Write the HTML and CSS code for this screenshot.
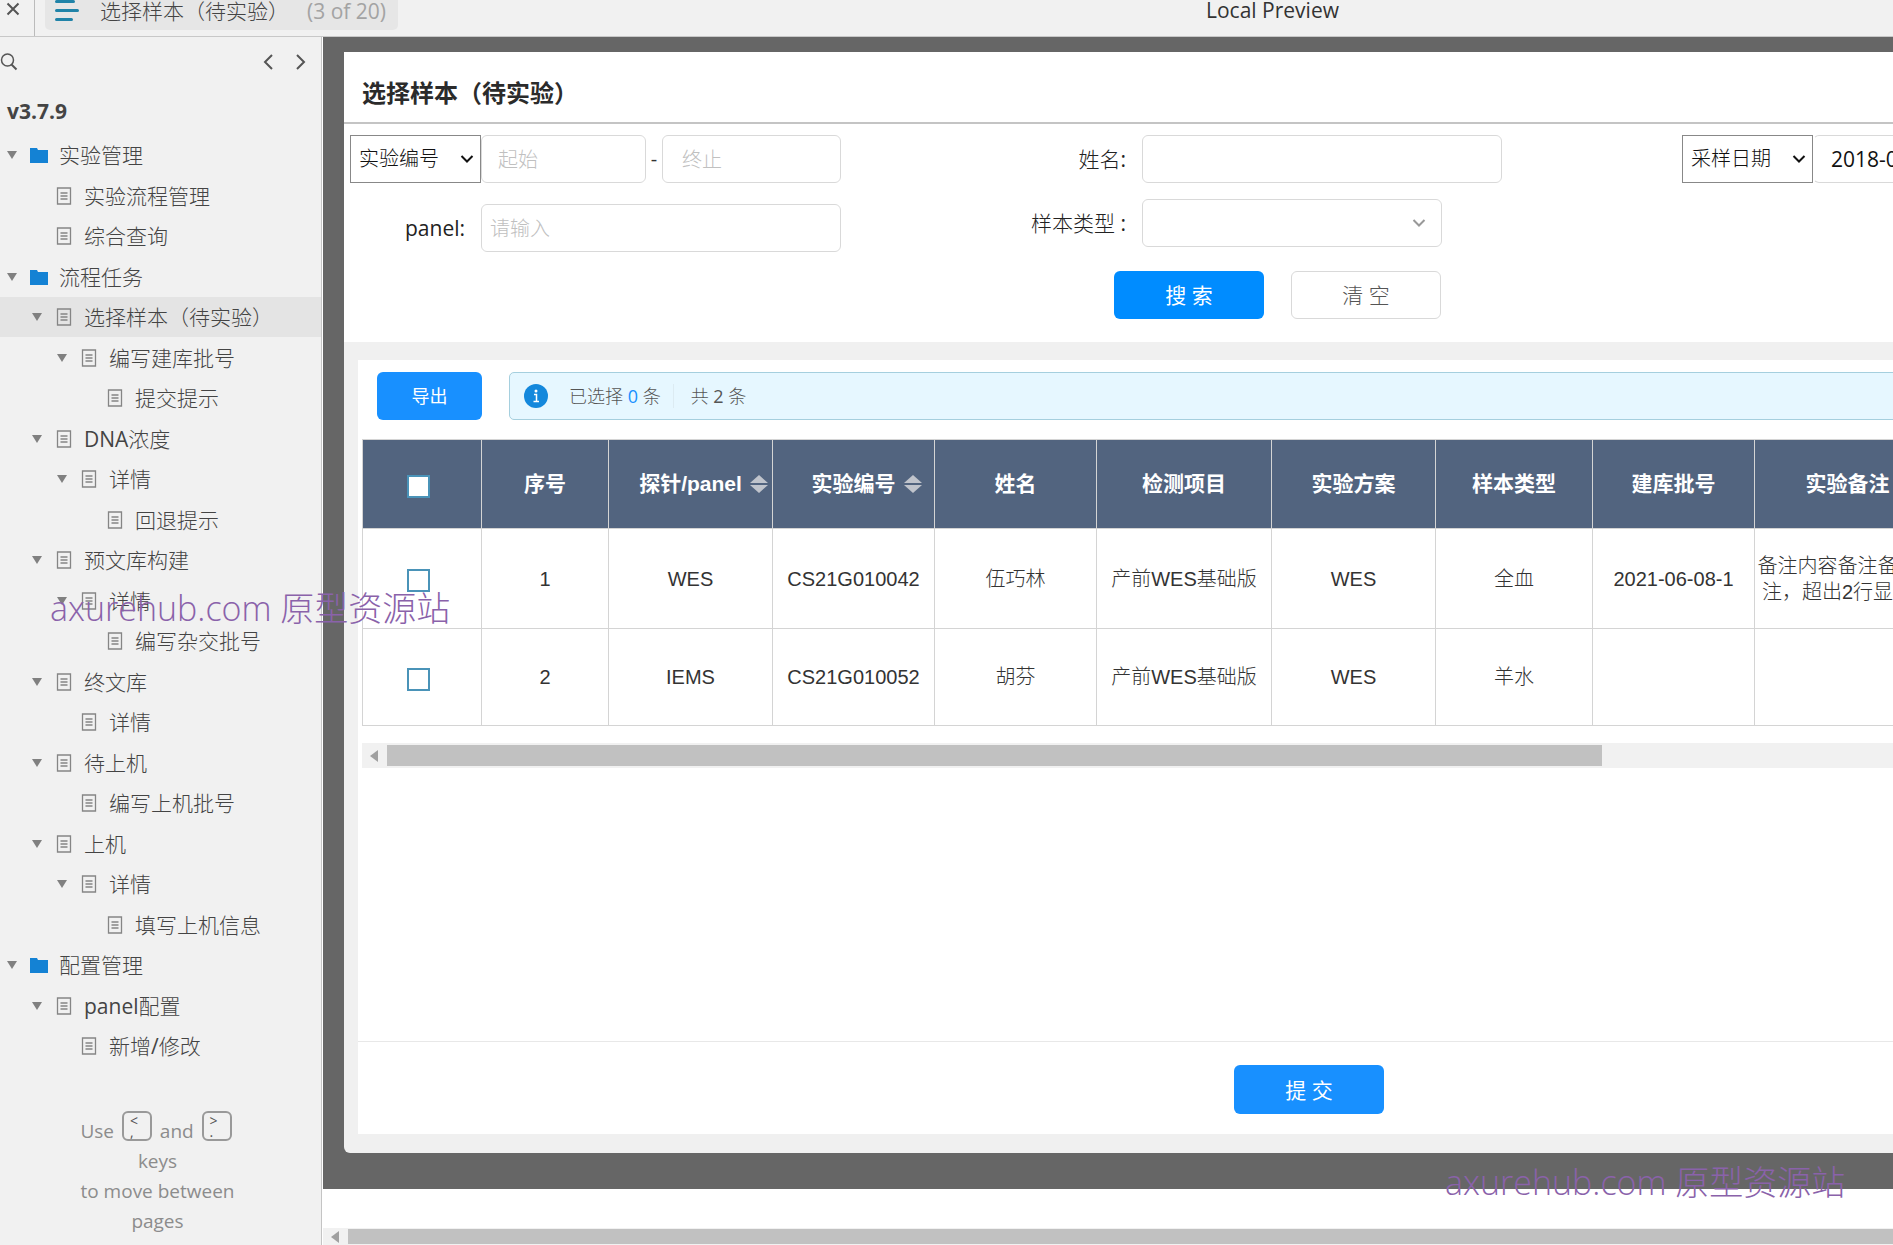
FILE: index.html
```html
<!DOCTYPE html>
<html lang="zh-CN">
<head>
<meta charset="utf-8">
<title>选择样本（待实验）</title>
<link rel="stylesheet" href="styles.css">
</head>
<body>
<svg class="defs" aria-hidden="true">
  <symbol id="i-caret" viewBox="0 0 10 8"><path d="M0 0h10L5 8z" fill="#808080"/></symbol>
  <symbol id="i-folder" viewBox="0 0 18 16"><path d="M0 1h7l1 2h10v13H0z" fill="#1482d4"/></symbol>
  <symbol id="i-page" viewBox="0 0 18 18"><path d="M2.500 1h13v16h-13zM5.500 6h7M5.500 9h7M5.500 12h7" fill="none" stroke="#858585" stroke-width="1.300"/></symbol>
  <symbol id="i-chevron" viewBox="0 0 14 14"><path d="M1.500 4L7 9.500 12.500 4" fill="none" stroke="currentColor" stroke-width="2"/></symbol>
  <symbol id="i-sort" viewBox="0 0 18 18"><path d="M9 0l9 8H0zM9 18l9-8H0z" fill="#c0c4cc"/></symbol>
</svg>

<header class="topbar">
  <button class="close" aria-label="关闭"><svg width="14" height="14" viewBox="0 0 14 14"><path d="M1.500 1.500l11 11M12.500 1.500l-11 11" stroke="#555" stroke-width="2"/></svg></button>
  <button class="page-pill">
    <svg width="24" height="22" viewBox="0 0 24 22"><path d="M1.500 1.500h17M1.500 10.500h21M1.500 19.500h15" stroke="#2083a8" stroke-width="3" stroke-linecap="round"/></svg>
    <span class="pill-name">选择样本（待实验）</span>
    <span class="pill-count">(3 of 20)</span>
  </button>
  <span class="preview">Local Preview</span>
</header>

<div class="main">
  <aside class="sidebar">
    <div class="side-tools">
      <button aria-label="搜索页面"><svg width="18" height="18" viewBox="0 0 18 18"><circle cx="7.500" cy="7" r="6" fill="none" stroke="#555" stroke-width="1.500"/><path d="M11.500 11.500l5 5" stroke="#555" stroke-width="2"/></svg></button>
      <button class="prev" aria-label="上一页"><svg width="12" height="18" viewBox="0 0 12 18"><path d="M10 2L3 9l7 7" fill="none" stroke="#555" stroke-width="2"/></svg></button>
      <button aria-label="下一页"><svg width="12" height="18" viewBox="0 0 12 18"><path d="M2 2l7 7-7 7" fill="none" stroke="#555" stroke-width="2"/></svg></button>
    </div>
    <h2 class="version">v3.7.9</h2>
    <nav>
      <ul class="tree">
        <li class="l0"><svg class="caret"><use href="#i-caret"/></svg><svg class="icon"><use href="#i-folder"/></svg><a href="#">实验管理</a></li>
        <li class="l1"><span class="caret"></span><svg class="icon"><use href="#i-page"/></svg><a href="#">实验流程管理</a></li>
        <li class="l1"><span class="caret"></span><svg class="icon"><use href="#i-page"/></svg><a href="#">综合查询</a></li>
        <li class="l0"><svg class="caret"><use href="#i-caret"/></svg><svg class="icon"><use href="#i-folder"/></svg><a href="#">流程任务</a></li>
        <li class="l1 current"><svg class="caret"><use href="#i-caret"/></svg><svg class="icon"><use href="#i-page"/></svg><a href="#">选择样本（待实验）</a></li>
        <li class="l2"><svg class="caret"><use href="#i-caret"/></svg><svg class="icon"><use href="#i-page"/></svg><a href="#">编写建库批号</a></li>
        <li class="l3"><span class="caret"></span><svg class="icon"><use href="#i-page"/></svg><a href="#">提交提示</a></li>
        <li class="l1"><svg class="caret"><use href="#i-caret"/></svg><svg class="icon"><use href="#i-page"/></svg><a href="#">DNA浓度</a></li>
        <li class="l2"><svg class="caret"><use href="#i-caret"/></svg><svg class="icon"><use href="#i-page"/></svg><a href="#">详情</a></li>
        <li class="l3"><span class="caret"></span><svg class="icon"><use href="#i-page"/></svg><a href="#">回退提示</a></li>
        <li class="l1"><svg class="caret"><use href="#i-caret"/></svg><svg class="icon"><use href="#i-page"/></svg><a href="#">预文库构建</a></li>
        <li class="l2"><svg class="caret"><use href="#i-caret"/></svg><svg class="icon"><use href="#i-page"/></svg><a href="#">详情</a></li>
        <li class="l3"><span class="caret"></span><svg class="icon"><use href="#i-page"/></svg><a href="#">编写杂交批号</a></li>
        <li class="l1"><svg class="caret"><use href="#i-caret"/></svg><svg class="icon"><use href="#i-page"/></svg><a href="#">终文库</a></li>
        <li class="l2"><span class="caret"></span><svg class="icon"><use href="#i-page"/></svg><a href="#">详情</a></li>
        <li class="l1"><svg class="caret"><use href="#i-caret"/></svg><svg class="icon"><use href="#i-page"/></svg><a href="#">待上机</a></li>
        <li class="l2"><span class="caret"></span><svg class="icon"><use href="#i-page"/></svg><a href="#">编写上机批号</a></li>
        <li class="l1"><svg class="caret"><use href="#i-caret"/></svg><svg class="icon"><use href="#i-page"/></svg><a href="#">上机</a></li>
        <li class="l2"><svg class="caret"><use href="#i-caret"/></svg><svg class="icon"><use href="#i-page"/></svg><a href="#">详情</a></li>
        <li class="l3"><span class="caret"></span><svg class="icon"><use href="#i-page"/></svg><a href="#">填写上机信息</a></li>
        <li class="l0"><svg class="caret"><use href="#i-caret"/></svg><svg class="icon"><use href="#i-folder"/></svg><a href="#">配置管理</a></li>
        <li class="l1"><svg class="caret"><use href="#i-caret"/></svg><svg class="icon"><use href="#i-page"/></svg><a href="#">panel配置</a></li>
        <li class="l2"><span class="caret"></span><svg class="icon"><use href="#i-page"/></svg><a href="#">新增/修改</a></li>
      </ul>
    </nav>
    <p class="hint">Use <kbd>&lt;<br>,</kbd> and <kbd>&gt;<br>.</kbd><br>keys<br>to move between<br>pages</p>
  </aside>

  <div class="viewport">
    <div class="stage">
      <main class="canvas">
        <section class="filters">
          <h1>选择样本（待实验）</h1>
          <form class="form">
            <div class="col col-range">
              <div class="row">
                <span class="picker native">
                  <select aria-label="编号类型"><option>实验编号</option></select>
                  <svg width="14" height="14"><use href="#i-chevron"/></svg>
                </span>
                <input class="field from" type="text" placeholder="起始" aria-label="起始">
                <span class="dash">-</span>
                <input class="field to" type="text" placeholder="终止" aria-label="终止">
              </div>
              <div class="row">
                <label class="label" for="panel">panel:</label>
                <input class="field wide panel" id="panel" type="text" placeholder="请输入">
              </div>
            </div>
            <div class="col col-name">
              <div class="row">
                <label class="label" for="name">姓名:</label>
                <input class="field wide" id="name" type="text">
              </div>
              <div class="row">
                <label class="label" for="kind">样本类型 :</label>
                <span class="picker soft">
                  <select id="kind"><option></option></select>
                  <svg width="14" height="14"><use href="#i-chevron"/></svg>
                </span>
              </div>
              <div class="row actions">
                <button type="button" class="btn search">搜 索</button>
                <button type="button" class="btn plain">清 空</button>
              </div>
            </div>
            <div class="col">
              <div class="row">
                <span class="picker native">
                  <select aria-label="日期类型"><option>采样日期</option></select>
                  <svg width="14" height="14"><use href="#i-chevron"/></svg>
                </span>
                <input class="field date" type="text" value="2018-08-01" aria-label="开始日期">
              </div>
            </div>
          </form>
        </section>

        <section class="card">
          <div class="card-body">
            <div class="toolbar">
              <button class="btn export">导出</button>
              <div class="alert">
                <svg width="24" height="24" viewBox="0 0 24 24"><circle cx="12" cy="12" r="12" fill="#1488dc"/><circle cx="12" cy="7" r="1.500" fill="#fff"/><path d="M10 10.500h2.500V17M9.500 17.500h5.500" fill="none" stroke="#fff" stroke-width="1.500"/></svg>
                <span class="picked">已选择 <b>0</b> 条</span>
                <span class="total">共 2 条</span>
              </div>
            </div>
            <div class="table-wrap">
              <table>
                <colgroup><col class="c119"><col class="c127"><col class="c164"><col class="c162"><col class="c162"><col class="c175"><col class="c164"><col class="c157"><col class="c162"><col class="c186"></colgroup>
                <thead>
                  <tr>
                    <th class="tick"><input type="checkbox" aria-label="全选"></th>
                    <th>序号</th>
                    <th><span class="sortable"><span>探针/panel</span><svg width="18" height="18"><use href="#i-sort"/></svg></span></th>
                    <th><span class="sortable"><span>实验编号</span><svg width="18" height="18"><use href="#i-sort"/></svg></span></th>
                    <th>姓名</th><th>检测项目</th><th>实验方案</th><th>样本类型</th><th>建库批号</th><th>实验备注</th>
                  </tr>
                </thead>
                <tbody>
                  <tr class="r1"><td class="tick"><input type="checkbox" aria-label="选择第1行"></td><td>1</td><td>WES</td><td>CS21G010042</td><td>伍巧林</td><td>产前WES基础版</td><td>WES</td><td>全血</td><td>2021-06-08-1</td><td>备注内容备注备注备<br>注，超出2行显示…</td></tr>
                  <tr class="r2"><td class="tick"><input type="checkbox" aria-label="选择第2行"></td><td>2</td><td>IEMS</td><td>CS21G010052</td><td>胡芬</td><td>产前WES基础版</td><td>WES</td><td>羊水</td><td></td><td></td></tr>
                </tbody>
              </table>
            </div>
            <div class="scrollbar inner"><svg width="8" height="12" viewBox="0 0 8 12"><path d="M8 0v12L0 6z" fill="#a0a0a0"/></svg><div class="thumb"></div></div>
          </div>
          <footer class="card-foot"><button class="btn submit">提 交</button></footer>
        </section>
      </main>
    </div>
    <div class="scrollbar outer"><svg width="8" height="12" viewBox="0 0 8 12"><path d="M8 0v12L0 6z" fill="#a0a0a0"/></svg><div class="thumb"></div></div>
  </div>
</div>

<div class="mark mark-a">axurehub.com 原型资源站</div>
<div class="mark mark-b">axurehub.com 原型资源站</div>
</body>
</html>
```
FILE: styles.css
```css
* { box-sizing: border-box; }

:root {
  --ui: "Open Sans", "Noto Sans CJK SC Light", "Noto Sans CJK SC", sans-serif;
  --data: "Liberation Sans", "Noto Sans CJK SC Light", "Noto Sans CJK SC", sans-serif;
  --strong: "Open Sans", "Noto Sans CJK SC", sans-serif;
  --line: #d9d9d9;
  --blue: #1890ff;
}

body {
  margin: 0;
  height: 100vh;
  display: flex;
  flex-direction: column;
  overflow: hidden;
  background: #fff;
  color: #333;
  font: 400 21px/30px var(--ui);
}

button, input, select { font: inherit; color: inherit; margin: 0; }
button { border: 0; background: none; padding: 0; }
svg { display: block; flex: none; }
.defs { position: absolute; width: 0; height: 0; }

/* top bar */
.topbar {
  display: flex;
  align-items: flex-start;
  height: 37px;
  flex: none;
  background: #f1f1f1;
  border-bottom: 1px solid #c8c8c8;
}
.close { width: 35px; height: 36px; padding: 2px 0 0 6px; border-right: 1px solid #bbb; display: flex; }
.page-pill {
  display: flex;
  align-items: flex-start;
  width: 353px;
  height: 30px;
  margin-left: 10px;
  padding-left: 10px;
  background: #e6e6e6;
  border-radius: 0 0 5px 5px;
  line-height: 23px;
}
.pill-name { margin-left: 21px; color: #444; }
.pill-count { margin-left: 18px; color: #a3a3a3; }
.preview { margin-left: 808px; line-height: 20px; color: #333; white-space: nowrap; }

.main { flex: 1; display: flex; min-height: 0; }

/* page tree */
.sidebar {
  width: 322px;
  flex: none;
  background: #f1f1f1;
  border-right: 1px solid #c4c4c4;
  color: #444;
}
.side-tools { display: flex; align-items: center; height: 50px; padding: 0 14px 0 0; gap: 21px; }
.side-tools .prev { margin-left: auto; }
.version { margin: 9px 0; padding-left: 7px; font-size: 21px; font-weight: 700; line-height: 30px; }
.tree { list-style: none; margin: 0; padding: 0; }
.tree li { display: flex; align-items: center; height: 40px; }
.tree li:nth-child(even) { height: 41px; }
.tree .current { background: #e4e4e4; }
.tree a { color: inherit; text-decoration: none; margin-left: 11px; white-space: nowrap; }
.caret { width: 10px; height: 8px; flex: none; margin-right: 13px; }
.icon { width: 18px; height: 18px; }
.l0 { padding-left: 7px; }
.l1 { padding-left: 32px; }
.l2 { padding-left: 57px; }
.l3 { padding-left: 83px; }
.hint { margin: 45px 6px 0 0; text-align: center; font-size: 19px; color: #8c8c8c; }
.hint kbd {
  display: inline-block;
  width: 30px;
  height: 30px;
  margin: 0 3px;
  padding: 2px 0 0 6px;
  border: 2px solid #999;
  border-radius: 6px;
  overflow: hidden;
  font: 14px/11px var(--ui);
  color: #555;
  text-align: left;
  vertical-align: -3px;
}

/* preview area */
.viewport { flex: 1; min-width: 0; display: flex; flex-direction: column; overflow: hidden; padding-left: 1px; }
.stage { background: #666; padding: 15px 0 36px 21px; }
.canvas { width: 1930px; background: #f0f0f0; border-radius: 0 0 6px 6px; overflow: hidden; padding-bottom: 19px; }

.filters { background: #fff; padding-bottom: 23px; }
h1 {
  margin: 0;
  padding: 26px 18px 15px;
  border-bottom: 2px solid #c4c4c4;
  font: 700 24px/29px var(--strong);
  color: #2b2b2b;
}
.form { display: flex; gap: 180px; padding: 11px 0 0 6px; font-size: 20px; }
.col { display: flex; flex-direction: column; gap: 16px; }
.col-range { gap: 21px; width: 491px; }
.row { display: flex; align-items: center; }
.label { flex: 1; text-align: right; padding-right: 16px; font-size: 21px; color: #222; white-space: nowrap; }
.col-name { width: 481px; }
.field, .picker select {
  height: 48px;
  border: 1px solid var(--line);
  border-radius: 6px;
  background: #fff;
  padding: 0 12px;
  outline: 0;
}
.field::placeholder { color: #c0c0c0; opacity: 1; }
.from { width: 165px; padding-left: 16px; }
.dash { width: 16px; text-align: center; }
.to { width: 179px; padding-left: 19px; }
.wide { width: 360px; }
.panel { padding-left: 8px; }
.date { width: 180px; padding-left: 17px; font-size: 21px; color: #111; border-left-color: transparent; }

.picker { display: grid; align-items: center; flex: none; color: #111; }
.picker select, .picker svg { grid-area: 1 / 1; }
.picker select { appearance: none; width: 100%; padding: 0 8px; }
.picker svg { justify-self: end; margin-right: 7px; pointer-events: none; }
.native { width: 131px; }
.native select { border: 1px solid #888; border-radius: 0; }
.soft { width: 300px; margin-right: 60px; color: #999; }
.soft svg { margin-right: 16px; }

.btn { height: 48px; border-radius: 6px; background: var(--blue); color: #fff; font: 400 21px/30px var(--strong); }
.actions { gap: 27px; padding: 8px 0 0 93px; }
.search, .plain, .submit { width: 150px; }
.search { background: #008cff; }
.plain { background: #fff; border: 1px solid var(--line); color: #555; font-family: var(--ui); }

/* results card */
.card { margin: 18px 14px 0; background: #fff; }
.card-body { min-height: 681px; padding: 12px 0 0 4px; }
.toolbar { display: flex; gap: 27px; padding-left: 15px; font-size: 18px; }
.export { width: 105px; font-size: 18px; }
.alert {
  flex: 1;
  display: flex;
  align-items: center;
  height: 48px;
  padding-left: 14px;
  border: 1px solid #a5cfde;
  border-radius: 5px;
  background: #e6f7ff;
  color: #555;
}
.picked { margin-left: 21px; padding-right: 12px; border-right: 1px solid #dcebf2; line-height: 24px; }
.picked b { color: var(--blue); font-weight: 400; }
.total { margin-left: 17px; }

.table-wrap { margin-top: 19px; overflow: hidden; }
table { border-collapse: collapse; table-layout: fixed; width: 1578px; font: 400 20px/26px var(--data); }
th, td { border: 1px solid #d4d4d4; padding: 0; text-align: center; vertical-align: middle; white-space: nowrap; }
th { height: 89px; background: #52647f; color: #fff; font: 700 21px/26px "Liberation Sans", "Noto Sans CJK SC", sans-serif; }
.r1 td { height: 100px; }
.r2 td { height: 97px; }
.tick { padding-right: 7px; }
.tick input {
  appearance: none;
  display: block;
  width: 23px;
  height: 23px;
  margin: 4px auto 0;
  border: 2px solid #4a93b8;
  background: #fff;
}
.sortable { display: grid; grid-template-columns: 1fr auto 1fr; gap: 8px; align-items: center; }
.sortable span { grid-column: 2; }
.c119 { width: 119px; }
.c127 { width: 127px; }
.c157 { width: 157px; }
.c162 { width: 162px; }
.c164 { width: 164px; }
.c175 { width: 175px; }
.c186 { width: 186px; }

.scrollbar { display: flex; align-items: center; background: #f1f1f1; }
.scrollbar svg { margin: 0 9px 0 8px; }
.scrollbar .thumb { background: #c1c1c1; }
.inner { height: 25px; margin-top: 17px; }
.inner .thumb { width: 1215px; height: 21px; }
.outer { height: 17px; margin-top: auto; flex: none; }
.outer .thumb { flex: 1; height: 15px; }

.card-foot { display: flex; justify-content: center; border-top: 1px solid #e8e8e8; padding: 23px 0 20px; }
.submit { height: 49px; }

/* site mark drawn over the page */
.mark { position: absolute; color: #8a62aa; font: 300 34px/40px "Open Sans", "Noto Sans CJK SC", sans-serif; white-space: nowrap; pointer-events: none; }
.mark-a { left: 50px; top: 588px; }
.mark-b { left: 1445px; top: 1162px; }
```
